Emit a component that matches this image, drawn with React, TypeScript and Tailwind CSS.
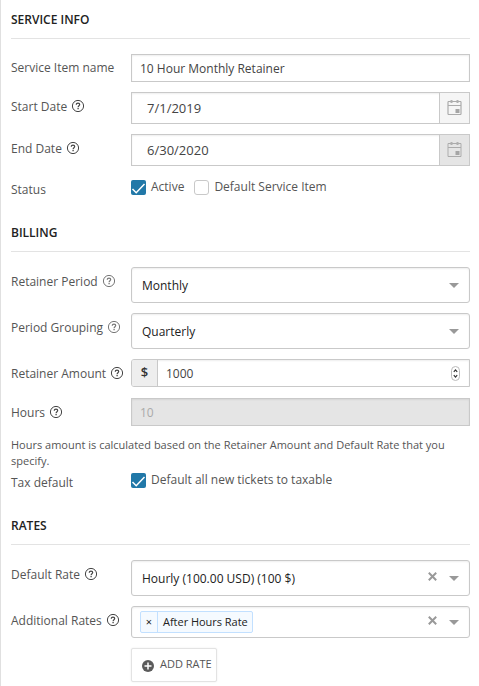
import React from "react";

function Help({ light = false }: { light?: boolean }) {
  return (
    <svg
      className={"mb-0.5 ml-[5px] size-3 shrink-0 overflow-visible " + (light ? "text-[#777]" : "text-[#444]")}
      viewBox="0 0 12 12"
      fill="none"
      stroke="currentColor"
    >
      <circle cx="6" cy="6" r="5.6" strokeWidth="1" />
      <path d="M4.3 4.8C4.3 3.7 5 3.1 6 3.1s1.7.6 1.7 1.5C7.7 5.7 6.1 5.8 6.1 7.2" strokeWidth="1.2" />
      <path d="M6.1 8v1.3" strokeWidth="1.3" />
    </svg>
  );
}

function Heading({ children, className }: { children: React.ReactNode; className: string }) {
  return (
    <h2 className={"flex items-start border-b border-[#e3e3e3] text-[12px] leading-4 font-semibold text-[#222] " + className}>
      {children}
    </h2>
  );
}

function Row({
  label,
  help,
  light,
  row,
  pad,
  children,
}: {
  label: string;
  help?: boolean;
  light?: boolean;
  row: string;
  pad: string;
  children: React.ReactNode;
}) {
  return (
    <div className={"flex items-start " + row}>
      <div className={"flex w-[120px] shrink-0 items-center leading-4 whitespace-nowrap " + pad}>
        <span>{label}</span>
        {help && <Help light={light} />}
      </div>
      {children}
    </div>
  );
}

const box = "flex w-[339px] items-center border border-[#c9c9c9] bg-white shadow-[inset_0_1px_2px_rgba(0,0,0,0.07)] ";

function Calendar({ shade }: { shade: string }) {
  return (
    <div className={"flex h-full w-[30px] items-start justify-center border-l border-[#c9c9c9] pt-[7px] " + shade}>
      <svg className="h-4 w-[15px]" viewBox="0 0 15 16" fill="none">
        <path d="M1 1.5v13M14 1.5v13" stroke="#c9c9c9" strokeWidth="2" />
        <path d="M1 1.5h13M1 5.5h13M1 14.5h13" stroke="#ababab" />
        <path d="M4.5 0v3M10.5 0v3" stroke="#b0b0b0" strokeWidth="2" />
        <path d="M8.5 9h4v4h-4z" fill="#a5a5a5" />
      </svg>
    </div>
  );
}

function Arrow() {
  return (
    <svg className="mr-2.5 h-[5px] w-2.5" viewBox="0 0 10 5">
      <path d="M0 0h10L5 5z" fill="#999" />
    </svg>
  );
}

function Clear() {
  return (
    <svg className="mr-3 mb-[3px] size-[9px]" viewBox="0 0 9 9" stroke="#999" strokeWidth="2">
      <path d="M.8.8l7.4 7.4M8.2.8L.8 8.2" />
    </svg>
  );
}

function Check({ checked, label }: { checked?: boolean; label: string }) {
  return (
    <label className="flex items-start">
      {checked ? (
        <svg className="size-[15px]" viewBox="0 0 15 15">
          <rect width="15" height="15" rx="2" fill="#2178a8" />
          <path d="M1.5 9l3.7 3.7L13.5 4" fill="none" stroke="#fff" strokeWidth="1.5" />
        </svg>
      ) : (
        <span className="size-[15px] rounded-[3px] border border-[#c9c9c9] bg-white" />
      )}
      <span className="-mt-px ml-[5px] leading-4">{label}</span>
    </label>
  );
}

export default function App() {
  return (
    <main className="h-[686px] w-[479px] overflow-hidden border-l border-[#e0e0e0] bg-white pr-[9px] pl-2.5 font-['Open_Sans',sans-serif] text-[12px] text-[#555]">
      <Heading className="h-[39px] pt-3">SERVICE INFO</Heading>
      <Row label="Service Item name" row="mt-[15px] h-7" pad="pt-1.5">
        <div className={box + "h-7 pl-2 text-[#444]"}>
          <span className="pt-0.5">10 Hour Monthly Retainer</span>
        </div>
      </Row>
      <Row label="Start Date" help row="mt-2.5 h-8" pad="pt-[7px]">
        <div className={box + "h-8 justify-between pl-[15px] text-[13px] text-[#444]"}>
          <span className="pt-0.5">7/1/2019</span>
          <Calendar shade="bg-[#f5f5f5]" />
        </div>
      </Row>
      <Row label="End Date" help row="mt-2.5 h-8" pad="pt-[7px]">
        <div className={box + "h-8 justify-between pl-[15px] text-[13px] text-[#444]"}>
          <span className="pt-0.5">6/30/2020</span>
          <Calendar shade="bg-[#e5e5e5]" />
        </div>
      </Row>
      <Row label="Status" row="mt-3.5 h-[15px]" pad="pt-0.5">
        <div className="flex gap-2.5">
          <Check checked label="Active" />
          <Check label="Default Service Item" />
        </div>
      </Row>
      <Heading className="mt-[30px] h-[27px]">BILLING</Heading>
      <Row label="Retainer Period" help light row="mt-[15px] h-9" pad="pt-[7px]">
        <div className={box + "h-9 justify-between rounded-[3px] pl-2.5 text-[#222]"}>
          <span className="pt-0.5">Monthly</span>
          <Arrow />
        </div>
      </Row>
      <Row label="Period Grouping" help light row="mt-2.5 h-9" pad="pt-[7px]">
        <div className={box + "h-9 justify-between rounded-[3px] pl-2.5 text-[#222]"}>
          <span className="pt-0.5">Quarterly</span>
          <Arrow />
        </div>
      </Row>
      <Row label="Retainer Amount" help row="mt-2.5 h-7" pad="pt-[7px]">
        <div className={box + "h-7 rounded-l-[3px] text-[#444]"}>
          <span className="flex h-full w-[26px] items-center justify-center rounded-l-[2px] border-r border-[#c9c9c9] bg-[#eee] text-[13px] font-semibold text-[#333]">
            $
          </span>
          <span className="grow pt-0.5 pl-2">1000</span>
          <svg className="mr-[9px] h-[15px] w-[9px]" viewBox="0 0 9 15" fill="none">
            <rect x=".5" y=".5" width="8" height="14" rx="4" stroke="#bbb" />
            <path d="M2.8 5.8l1.7-1.9 1.7 1.9M2.8 9.2l1.7 1.9 1.7-1.9" stroke="#333" strokeWidth="1.2" />
          </svg>
        </div>
      </Row>
      <Row label="Hours" help row="mt-[11px] h-7" pad="pt-[7px]">
        <div className="flex h-7 w-[339px] items-center border border-[#c9c9c9] bg-[#e5e5e5] pt-0.5 pl-2 text-[#aaa] shadow-[inset_0_1px_2px_rgba(0,0,0,0.07)]">
          10
        </div>
      </Row>
      <p className="mt-[11px] h-8 text-[11px] leading-4">
        Hours amount is calculated based on the Retainer Amount and Default Rate that you specify.
      </p>
      <Row label="Tax default" row="mt-1 h-[15px]" pad="pt-0.5">
        <Check checked label="Default all new tickets to taxable" />
      </Row>
      <Heading className="mt-[30px] h-[27px]">RATES</Heading>
      <Row label="Default Rate" help row="mt-[15px] h-9" pad="pt-[7px]">
        <div className={box + "h-9 rounded-[3px] pl-2.5 text-[#222]"}>
          <span className="grow pt-0.5">Hourly (100.00 USD) (100 $)</span>
          <Clear />
          <Arrow />
        </div>
      </Row>
      <Row label="Additional Rates" help row="mt-2.5 h-8" pad="pt-[7px]">
        <div className={box + "h-8 rounded-[3px] pl-2 text-[#222]"}>
          <div className="flex h-[22px] w-[113px] items-center rounded-[2px] border border-[#c2e0ff] bg-[#f5faff] text-[11px] whitespace-nowrap">
            <span className="flex h-full w-[17px] shrink-0 items-center justify-center border-r border-[#c2e0ff]">×</span>
            <span className="pl-[5px] tracking-[-0.03px]">After Hours Rate</span>
          </div>
          <span className="grow" />
          <Clear />
          <Arrow />
        </div>
      </Row>
      <button className="mt-2.5 ml-[120px] flex h-[34px] w-[86px] items-center rounded-[2px] border border-[#e3e3e3] bg-white pl-2.5 text-[11px] whitespace-nowrap shadow-[0_0_2px_rgba(0,0,0,0.08)]">
        <svg className="mt-0.5 mr-1.5 size-3 shrink-0" viewBox="0 0 12 12">
          <circle cx="6" cy="6" r="6" fill="#5b5b5b" />
          <path d="M6 2.5v7M2.5 6h7" stroke="#fff" strokeWidth="1.5" />
        </svg>
        <span className="pb-0.5">ADD RATE</span>
      </button>
    </main>
  );
}
